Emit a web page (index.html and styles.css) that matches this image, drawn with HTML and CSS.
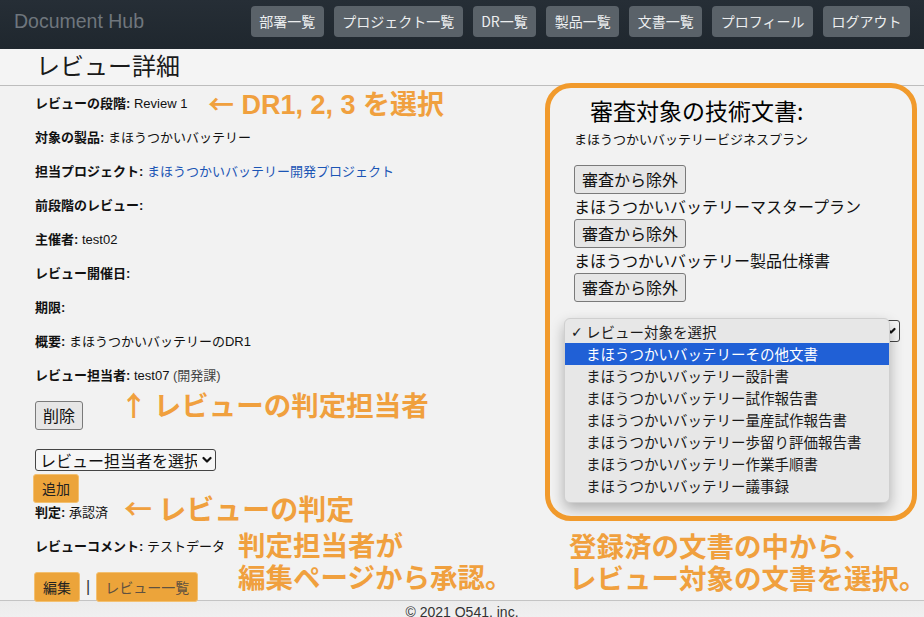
FILE: index.html
```html
<!DOCTYPE html>
<html lang="ja">
<head>
<meta charset="utf-8">
<title>レビュー詳細 - Document Hub</title>
<link rel="stylesheet" href="styles.css">
</head>
<body>
<div class="page">
  <header class="navbar">
    <a class="brand" href="#">Document Hub</a>
    <nav class="nav">
      <a class="nav-btn" href="#">部署一覧</a>
      <a class="nav-btn" href="#">プロジェクト一覧</a>
      <a class="nav-btn" href="#">DR一覧</a>
      <a class="nav-btn" href="#">製品一覧</a>
      <a class="nav-btn" href="#">文書一覧</a>
      <a class="nav-btn" href="#">プロフィール</a>
      <a class="nav-btn" href="#">ログアウト</a>
    </nav>
  </header>

  <div class="title-bar">
    <h1 class="title">レビュー詳細</h1>
  </div>

  <main class="content">
    <section class="left">
      <p class="row"><b>レビューの段階:</b> Review 1</p>
      <p class="row"><b>対象の製品:</b> まほうつかいバッテリー</p>
      <p class="row"><b>担当プロジェクト:</b> <a class="link" href="#">まほうつかいバッテリー開発プロジェクト</a></p>
      <p class="row"><b>前段階のレビュー:</b></p>
      <p class="row"><b>主催者:</b> test02</p>
      <p class="row"><b>レビュー開催日:</b></p>
      <p class="row"><b>期限:</b></p>
      <p class="row"><b>概要:</b> まほうつかいバッテリーのDR1</p>
      <p class="row"><b>レビュー担当者:</b> test07 <span class="dept">(開発課)</span></p>
      <button class="native-btn">削除</button>
      <div class="select-wrap left-select">
        <select class="native-select">
          <option>レビュー担当者を選択</option>
        </select>
        <svg class="chevron" width="10" height="8" viewBox="0 0 10 8"><path d="M1.5 2 L5 5.5 L8.5 2" fill="none" stroke="#111" stroke-width="2.2" stroke-linecap="round" stroke-linejoin="round"/></svg>
      </div>
      <button class="orange-btn add-btn">追加</button>
      <p class="row verdict"><b>判定:</b> 承認済</p>
      <p class="row"><b>レビューコメント:</b> テストデータ</p>
      <div class="actions">
        <a class="orange-btn" href="#">編集</a>
        <span class="sep">|</span>
        <a class="orange-btn muted" href="#">レビュー一覧</a>
      </div>
    </section>

    <section class="right">
      <h3 class="docs-title">審査対象の技術文書:</h3>
      <p class="doc-first">まほうつかいバッテリービジネスプラン</p>
      <button class="native-btn">審査から除外</button>
      <div class="doc-name">まほうつかいバッテリーマスタープラン</div>
      <button class="native-btn">審査から除外</button>
      <div class="doc-name">まほうつかいバッテリー製品仕様書</div>
      <button class="native-btn">審査から除外</button>
      <div class="select-wrap right-select">
        <select class="native-select wide">
          <option>レビュー対象を選択</option>
        </select>
        <svg class="chevron" width="10" height="8" viewBox="0 0 10 8"><path d="M1.5 2 L5 5.5 L8.5 2" fill="none" stroke="#111" stroke-width="2.2" stroke-linecap="round" stroke-linejoin="round"/></svg>
        <ul class="dropdown">
          <li class="opt"><span class="check">✓</span>レビュー対象を選択</li>
          <li class="opt active">まほうつかいバッテリーその他文書</li>
          <li class="opt">まほうつかいバッテリー設計書</li>
          <li class="opt">まほうつかいバッテリー試作報告書</li>
          <li class="opt">まほうつかいバッテリー量産試作報告書</li>
          <li class="opt">まほうつかいバッテリー歩留り評価報告書</li>
          <li class="opt">まほうつかいバッテリー作業手順書</li>
          <li class="opt">まほうつかいバッテリー議事録</li>
        </ul>
      </div>
    </section>
  </main>

  <footer class="footer">© 2021 Q541, inc.</footer>

  <div class="frame"></div>
  <div class="note note-stage"><span class="arrow">←</span> DR1, 2, 3 を選択</div>
  <div class="note note-reviewer">↑ レビューの判定担当者</div>
  <div class="note note-verdict">← レビューの判定</div>
  <div class="note note-approve">判定担当者が<br>編集ページから承認。</div>
  <div class="note note-docs">登録済の文書の中から、<br>レビュー対象の文書を選択。</div>
</div>
</body>
</html>
```

FILE: styles.css
```css
* { box-sizing: border-box; }

html, body {
  margin: 0;
  padding: 0;
  background: #f2f2f2;
  font-family: "Liberation Sans", "Noto Sans CJK JP", sans-serif;
  color: #111;
  overflow: hidden;
}

.page {
  position: relative;
  width: 924px;
  height: 617px;
  overflow: hidden;
}

/* Navbar */
.navbar {
  height: 49px;
  background: linear-gradient(#262e36, #1f272e);
  display: flex;
  align-items: flex-start;
  padding: 6px 14px 0 14px;
}
.brand {
  color: #6f767d;
  font-size: 19.5px;
  line-height: 31px;
  text-decoration: none;
}
.nav {
  margin-left: auto;
  display: flex;
  gap: 10px;
}
.nav-btn {
  display: block;
  height: 31px;
  line-height: 31px;
  padding: 0 8.5px;
  background: #5a6269;
  color: #eceeef;
  font-family: "Noto Sans CJK JP", "Liberation Sans", sans-serif;
  font-size: 14px;
  border-radius: 4px;
  text-decoration: none;
}

/* Title */
.title-bar {
  height: 37px;
  border-bottom: 1px solid #bdbdbd;
  padding-left: 36px;
  background: #f4f4f4;
}
.title {
  margin: 0;
  font-weight: normal;
  font-size: 24px;
  line-height: 30px;
  padding-top: 1px;
  font-family: "Noto Sans CJK JP", sans-serif;
  color: #1a1a1a;
}

/* Content */
.content {
  display: grid;
  grid-template-columns: 1fr 326px;
  height: 514px;
  padding: 9px 24px 0 35px;
}

.left {
  display: flex;
  flex-direction: column;
  align-items: flex-start;
}
.row {
  margin: 0 0 16px 0;
  font-size: 13px;
  line-height: 18px;
  white-space: nowrap;
}
.row b { font-weight: bold; }
.link { color: #1b55b5; text-decoration: none; }
.dept { color: #444; }

.native-btn {
  font-family: "Noto Sans CJK JP", sans-serif;
  font-size: 16px;
  height: 29px;
  line-height: 25px;
  padding: 0 7px;
  background: #e6e6e6;
  border: 1px solid #7a7a7a;
  border-radius: 3px;
  color: #111;
}

.select-wrap {
  position: relative;
}
.left-select { margin-top: 19px; }
.native-select {
  appearance: none;
  -webkit-appearance: none;
  font-family: "Noto Sans CJK JP", sans-serif;
  font-size: 16px;
  height: 22px;
  line-height: 18px;
  padding: 0 18px 0 4px;
  width: 181px;
  border: 1px solid #444;
  border-radius: 3px;
  background: #f6f6f6;
  color: #111;
}
.chevron {
  position: absolute;
  right: 4px;
  top: 7px;
}

.orange-btn {
  display: inline-block;
  font-family: "Noto Sans CJK JP", sans-serif;
  font-size: 14px;
  height: 29px;
  line-height: 27px;
  padding: 0 8px;
  background: #eca43a;
  border: 1px solid #f3c070;
  border-radius: 3px;
  color: #222;
  text-decoration: none;
}
.add-btn { margin-top: 3px; margin-left: -2px; }
.verdict { margin-top: 1px; }

.actions {
  display: flex;
  align-items: center;
  gap: 6px;
  margin-left: -1px;
}
.actions .orange-btn { height: 30px; line-height: 28px; }
.sep { font-size: 16px; color: #333; }
.muted { color: #5f5140; }

/* Right column */
.right {
  display: flex;
  flex-direction: column;
  align-items: flex-start;
}
.docs-title {
  margin: 0;
  padding-left: 16px;
  font-size: 23px;
  line-height: 30px;
  font-weight: normal;
  color: #000;
  font-family: "Noto Sans CJK JP", sans-serif;
}
.doc-first {
  margin: 5px 0 17px 0;
  font-size: 13px;
  line-height: 18px;
  font-family: "Noto Sans CJK JP", sans-serif;
}
.doc-name {
  font-size: 16px;
  line-height: 25px;
  font-family: "Noto Sans CJK JP", sans-serif;
  white-space: nowrap;
}
.right-select { margin-top: 18px; }
.native-select.wide { width: 326px; }

.dropdown {
  position: absolute;
  left: -10px;
  top: -2px;
  width: 326px;
  margin: 0;
  padding: 2px 0 5px 0;
  list-style: none;
  background: #e7e7e7;
  border: 1px solid #cfcfcf;
  border-radius: 6px;
  box-shadow: 0 6px 14px rgba(0,0,0,0.28);
}
.opt {
  position: relative;
  height: 22px;
  line-height: 22px;
  padding-left: 21px;
  font-size: 14.5px;
  font-family: "Noto Sans CJK JP", sans-serif;
  color: #1a1a1a;
  white-space: nowrap;
}
.opt.active {
  background: #2060d6;
  color: #fff;
}
.check {
  position: absolute;
  left: 6px;
  font-size: 14px;
  font-family: "DejaVu Sans", sans-serif;
}

/* Footer */
.footer {
  border-top: 1px solid #c4c4c4;
  height: 17px;
  text-align: center;
  font-size: 14px;
  line-height: 22px;
  color: #333;
  background: linear-gradient(#ececec, #f0f0f0);
}

/* Annotations (overlay) */
.frame {
  position: absolute;
  left: 545px;
  top: 83px;
  width: 372px;
  height: 438px;
  border: 5px solid #f19a2c;
  border-radius: 26px;
  pointer-events: none;
}
.note {
  position: absolute;
  font-family: "Noto Sans CJK JP", sans-serif;
  font-weight: bold;
  color: #f0a03e;
  white-space: nowrap;
  pointer-events: none;
}
.note-stage { left: 208px; top: 86px; font-size: 27px; line-height: 34px; font-family: "Liberation Sans", "Noto Sans CJK JP", sans-serif; }
.note-stage .arrow { font-family: "Noto Sans CJK JP", sans-serif; font-size: 26px; }
.note-reviewer { left: 120px; top: 387px; font-size: 27.5px; line-height: 34px; }
.note-verdict { left: 124px; top: 491px; font-size: 28px; line-height: 34px; }
.note-approve { left: 238px; top: 528px; font-size: 27.5px; line-height: 32px; }
.note-docs { left: 569px; top: 529px; font-size: 27.5px; line-height: 32px; }
```
